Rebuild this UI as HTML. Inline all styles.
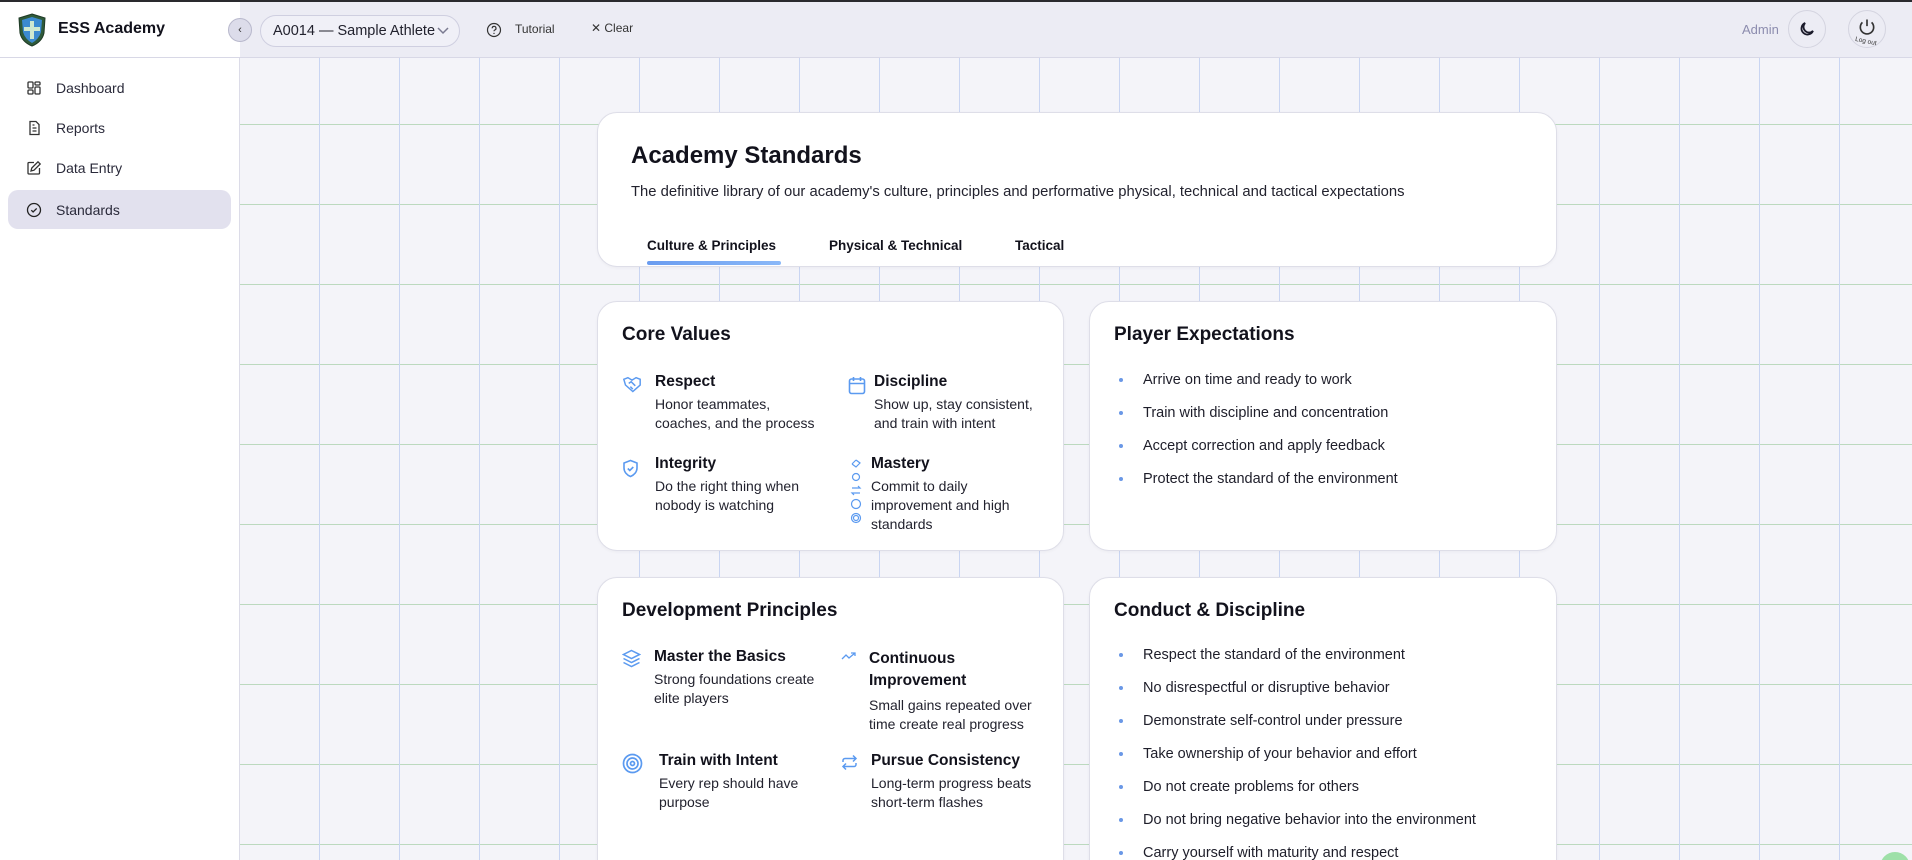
<!DOCTYPE html>
<html style="width:1912px;height:860px;overflow:hidden"><head><meta charset="utf-8"><style>
*{box-sizing:border-box;margin:0;padding:0}
body{width:1912px;height:860px;overflow:hidden;font-family:"Liberation Sans",sans-serif;color:#12121c;background:#f4f4f9;position:relative}
.abs{position:absolute}
#topline{left:0;top:0;width:1912px;height:2px;background:#2a2a2e}
#header{left:240px;top:2px;width:1672px;height:56px;background:#ececf4;border-bottom:1px solid #d8d8e6}
#brand{left:0;top:2px;width:240px;height:56px;background:#fff;border-bottom:1px solid #d8d8e6}
#side{left:0;top:58px;width:240px;height:802px;background:#fff;border-right:1px solid #dcdce8}
#grid{left:240px;top:58px;width:1672px;height:802px;
background-image:linear-gradient(90deg,#c9d5f2 1px,transparent 1px),linear-gradient(0deg,#bcd9bf 1px,transparent 1px);
background-size:80px 80px,80px 80px;background-position:79px 0,0 67px}
.nav{left:8px;width:223px;height:39px;border-radius:10px;display:flex;align-items:center;padding-left:18px;font-size:14px;color:#2a2a3a}
.nav svg{margin-right:14px}
.card{background:#fff;border:1px solid #dedee8;border-radius:20px;position:absolute;box-shadow:0 1px 3px rgba(0,0,0,.04)}
.ct{position:absolute;left:24px;top:22px;font-size:19px;font-weight:bold}
.it{position:absolute}
.it b{display:block;font-size:15.5px;margin-bottom:4px}
.it span{display:block;font-size:14px;line-height:19px;color:#22222e}
.ic{position:absolute}
.li{position:absolute;left:28px;font-size:14.5px;color:#1e1e2a}
.li:before{content:"";position:absolute;left:-24px;top:6px;width:4px;height:4px;border-radius:50%;background:#6a98e6}
#wrap{position:absolute;left:0;top:0;width:1912px;height:860px;overflow:hidden}
</style></head><body><div id="wrap">
<div id="grid" class="abs"></div>
<div id="header" class="abs"></div>
<div id="brand" class="abs"></div>
<div id="side" class="abs"></div>
<div id="topline" class="abs"></div>

<svg class="abs" style="left:17px;top:13px" width="30" height="34" viewBox="0 0 30 34"><path d="M15 1 L28 5 L27 20 Q25 29 15 33 Q5 29 3 20 L2 5 Z" fill="#2f5a3a" stroke="#1f3a26"/><path d="M15 4 L25 7 L24 19 Q22 26 15 30 Q8 26 6 19 L5 7Z" fill="#3c8ad0"/><path d="M13 8h4v6h6v4h-6v8h-4v-8H7v-4h6z" fill="#cfe8d0"/></svg>
<div class="abs" style="left:58px;top:20px;font-size:16px;font-weight:bold">ESS Academy</div>

<div class="abs" style="left:228px;top:18px;width:24px;height:24px;border-radius:50%;background:#dcdcea;border:1px solid #b8b8cc;font-size:11px;text-align:center;line-height:22px;color:#333">‹</div>
<div class="abs" style="left:260px;top:15px;width:200px;height:32px;border:1px solid #cfcfe0;border-radius:16px;background:#f0f0f7;font-size:14.5px;line-height:30px;padding-left:12px;color:#22222e">A0014 — Sample Athlete<svg style="position:absolute;right:10px;top:11px" width="12" height="8" viewBox="0 0 12 8"><path d="M1 1l5 5 5-5" fill="none" stroke="#7a7a90" stroke-width="1.5"/></svg></div>
<svg class="abs" style="left:486px;top:22px" width="16" height="16" viewBox="0 0 16 16"><circle cx="8" cy="8" r="6.5" fill="none" stroke="#333" stroke-width="1.2"/><path d="M6.2 6.3a1.9 1.9 0 1 1 2.6 1.7c-.6.3-.8.7-.8 1.3" fill="none" stroke="#333" stroke-width="1.2"/><circle cx="8" cy="11.4" r=".7" fill="#333"/></svg>
<div class="abs" style="left:515px;top:22px;font-size:12px;color:#333">Tutorial</div>
<div class="abs" style="left:591px;top:21px;font-size:12px;color:#333">✕ Clear</div>
<div class="abs" style="left:1742px;top:22px;font-size:13px;color:#8c8cae">Admin</div>
<div class="abs" style="left:1788px;top:10px;width:38px;height:38px;border-radius:50%;border:1px solid #d4d4e0;background:#ececf4"></div>
<svg class="abs" style="left:1798px;top:20px" width="18" height="18" viewBox="0 0 24 24"><path d="M20 14.5A8 8 0 1 1 9.5 4a6.5 6.5 0 0 0 10.5 10.5z" fill="none" stroke="#1a1a2a" stroke-width="2.4"/></svg>
<div class="abs" style="left:1848px;top:10px;width:38px;height:38px;border-radius:50%;border:1px solid #d4d4e0;background:#ececf4"></div>
<svg class="abs" style="left:1857px;top:17px" width="20" height="20" viewBox="0 0 24 24"><path d="M12 3v8M6.5 6.5a8 8 0 1 0 11 0" fill="none" stroke="#333" stroke-width="2"/></svg>
<div class="abs" style="left:1855px;top:38px;font-size:6.5px;color:#333;transform:rotate(12deg)">Log out</div>

<div class="abs nav" style="top:68px"><svg width="16" height="16" viewBox="0 0 16 16" fill="none" stroke="#333" stroke-width="1.3"><rect x="2" y="2" width="5" height="6" rx="1"/><rect x="9" y="2" width="5" height="3" rx="1"/><rect x="9" y="7" width="5" height="7" rx="1"/><rect x="2" y="10" width="5" height="4" rx="1"/></svg>Dashboard</div>
<div class="abs nav" style="top:108px"><svg width="16" height="16" viewBox="0 0 16 16" fill="none" stroke="#333" stroke-width="1.3"><path d="M4 1.5h6l3 3v10H4z"/><path d="M6.5 8h4M6.5 11h4M6.5 5h2"/></svg>Reports</div>
<div class="abs nav" style="top:148px"><svg width="16" height="16" viewBox="0 0 16 16" fill="none" stroke="#333" stroke-width="1.3"><path d="M8 2.5H3a1 1 0 0 0-1 1v9.5a1 1 0 0 0 1 1h9.5a1 1 0 0 0 1-1V8"/><path d="M12 1.8l2.2 2.2L8 10.2l-3 .8.8-3z"/></svg>Data Entry</div>
<div class="abs nav" style="top:190px;background:#e2e1ee"><svg width="16" height="16" viewBox="0 0 16 16" fill="none" stroke="#222" stroke-width="1.3"><circle cx="8" cy="8" r="6.5"/><path d="M5.3 8.2l1.8 1.8 3.6-3.6"/></svg>Standards</div>

<div class="card" style="left:597px;top:112px;width:960px;height:155px">
<div class="abs" style="left:33px;top:29px;font-size:24px;font-weight:bold">Academy Standards</div>
<div class="abs" style="left:33px;top:71px;font-size:14.8px;color:#22222e">The definitive library of our academy's culture, principles and performative physical, technical and tactical expectations</div>
<div class="abs" style="left:49px;top:125px;font-size:13.5px;font-weight:bold">Culture &amp; Principles</div>
<div class="abs" style="left:231px;top:125px;font-size:13.5px;font-weight:bold">Physical &amp; Technical</div>
<div class="abs" style="left:417px;top:125px;font-size:13.5px;font-weight:bold">Tactical</div>
<div class="abs" style="left:49px;top:148px;width:134px;height:4px;border-radius:3px;background:linear-gradient(90deg,#6a9cf0,#8ab8f8)"></div>
</div>

<div class="card" style="left:597px;top:301px;width:467px;height:250px">
<div class="ct">Core Values</div>
<svg class="ic" style="left:24px;top:74px" width="20" height="18" viewBox="0 0 24 22" fill="none" stroke="#5b9af0" stroke-width="1.8"><path d="M2 4l5-2 5 3 5-3 5 2v7l-9 8-9-8z"/><path d="M8 9l3-2 5 5M10 13l3 3"/></svg>
<div class="it" style="left:57px;top:71px"><b>Respect</b><span>Honor teammates,<br>coaches, and the process</span></div>
<svg class="ic" style="left:250px;top:74px" width="18" height="19" viewBox="0 0 18 19" fill="none" stroke="#5b9af0" stroke-width="1.6"><rect x="1.5" y="3" width="15" height="14.5" rx="2"/><path d="M1.5 7.5h15M5.5 1v4M12.5 1v4"/></svg>
<div class="it" style="left:276px;top:71px"><b>Discipline</b><span>Show up, stay consistent,<br>and train with intent</span></div>
<svg class="ic" style="left:24px;top:157px" width="17" height="19" viewBox="0 0 17 19" fill="none" stroke="#5b9af0" stroke-width="1.6"><path d="M8.5 1.5l6.5 2.5v5c0 4-3 7-6.5 8.5C5 16 2 13 2 9V4z"/><path d="M5.8 9.5l2 2 3.5-3.5"/></svg>
<div class="it" style="left:57px;top:153px"><b>Integrity</b><span>Do the right thing when<br>nobody is watching</span></div>
<svg class="ic" style="left:252px;top:156px" width="12" height="72" viewBox="0 0 12 72" fill="none" stroke="#5b9af0" stroke-width="1.2"><path d="M2 6l4-4M6 2l4 3-4 4-4-3"/><circle cx="6" cy="19" r="3.5"/><path d="M2 30h8l-2-2M10 35H2l2 2"/><circle cx="6" cy="46" r="4.5"/><circle cx="6" cy="60" r="4.5"/><circle cx="6" cy="60" r="2.5"/></svg>
<div class="it" style="left:273px;top:153px"><b>Mastery</b><span>Commit to daily<br>improvement and high<br>standards</span></div>
</div>

<div class="card" style="left:1089px;top:301px;width:468px;height:250px">
<div class="ct">Player Expectations</div>
<div class="li" style="left:53px;top:70px">Arrive on time and ready to work</div>
<div class="li" style="left:53px;top:103px">Train with discipline and concentration</div>
<div class="li" style="left:53px;top:136px">Accept correction and apply feedback</div>
<div class="li" style="left:53px;top:169px">Protect the standard of the environment</div>
</div>

<div class="card" style="left:597px;top:577px;width:467px;height:320px">
<div class="ct">Development Principles</div>
<svg class="ic" style="left:24px;top:71px" width="19" height="19" viewBox="0 0 19 19" fill="none" stroke="#5b9af0" stroke-width="1.5"><path d="M9.5 1.5l8 4-8 4-8-4z"/><path d="M1.5 9.5l8 4 8-4M1.5 13.5l8 4 8-4"/></svg>
<div class="it" style="left:56px;top:70px"><b>Master the Basics</b><span>Strong foundations create<br>elite players</span></div>
<svg class="ic" style="left:243px;top:73px" width="16" height="10" viewBox="0 0 16 10" fill="none" stroke="#5b9af0" stroke-width="1.3"><path d="M1 8l4-4 3 3 6-5M10 2h4v3"/></svg>
<div class="it" style="left:271px;top:70px"><b style="line-height:22px">Continuous<br>Improvement</b><span>Small gains repeated over<br>time create real progress</span></div>
<svg class="ic" style="left:24px;top:175px" width="21" height="21" viewBox="0 0 21 21" fill="none" stroke="#5b9af0" stroke-width="1.7"><circle cx="10.5" cy="10.5" r="9"/><circle cx="10.5" cy="10.5" r="5.5"/><circle cx="10.5" cy="10.5" r="2"/></svg>
<div class="it" style="left:61px;top:174px"><b>Train with Intent</b><span>Every rep should have<br>purpose</span></div>
<svg class="ic" style="left:243px;top:176px" width="17" height="17" viewBox="0 0 17 17" fill="none" stroke="#5b9af0" stroke-width="1.5"><path d="M12 1.5l3 3-3 3M2 8V6.5a2 2 0 0 1 2-2h11M5 15.5l-3-3 3-3M15 9v1.5a2 2 0 0 1-2 2H2"/></svg>
<div class="it" style="left:273px;top:174px"><b>Pursue Consistency</b><span>Long-term progress beats<br>short-term flashes</span></div>
</div>

<div class="card" style="left:1089px;top:577px;width:468px;height:320px">
<div class="ct">Conduct &amp; Discipline</div>
<div class="li" style="left:53px;top:69px">Respect the standard of the environment</div>
<div class="li" style="left:53px;top:102px">No disrespectful or disruptive behavior</div>
<div class="li" style="left:53px;top:135px">Demonstrate self-control under pressure</div>
<div class="li" style="left:53px;top:168px">Take ownership of your behavior and effort</div>
<div class="li" style="left:53px;top:201px">Do not create problems for others</div>
<div class="li" style="left:53px;top:234px">Do not bring negative behavior into the environment</div>
<div class="li" style="left:53px;top:267px">Carry yourself with maturity and respect</div>
</div>
<div class="abs" style="left:1880px;top:852px;width:30px;height:30px;border-radius:50%;background:#9ee0a8"></div>
</div></body></html>
